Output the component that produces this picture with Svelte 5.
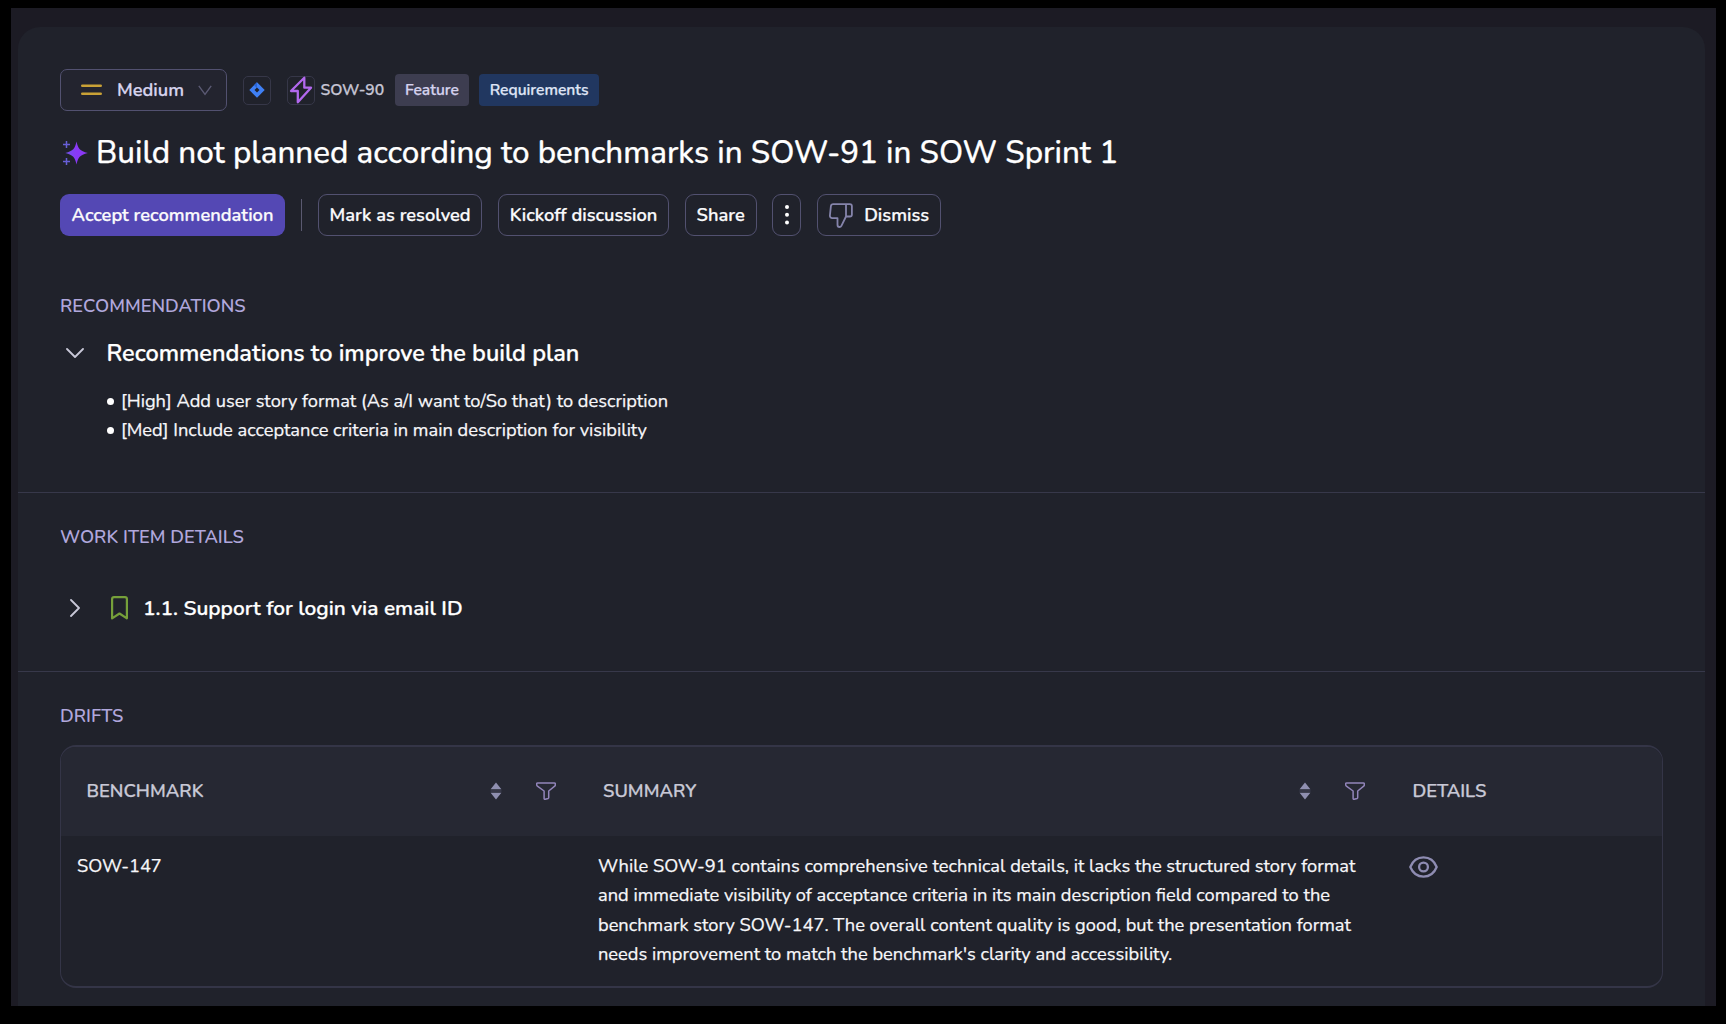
<script lang="ts">
  const title = 'Build not planned according to benchmarks in SOW-91 in SOW Sprint 1';

  const recommendations = [
    '[High] Add user story format (As a/I want to/So that) to description',
    '[Med] Include acceptance criteria in main description for visibility'
  ];

  const drifts = [
    {
      benchmark: 'SOW-147',
      summary: [
        'While SOW-91 contains comprehensive technical details, it lacks the structured story format',
        'and immediate visibility of acceptance criteria in its main description field compared to the',
        'benchmark story SOW-147. The overall content quality is good, but the presentation format',
        "needs improvement to match the benchmark's clarity and accessibility."
      ]
    }
  ];
</script>

{#snippet columnTools()}
  <button class="icon-btn sort" aria-label="Sort">
    <svg width="12" height="18" viewBox="0 0 12 18">
      <path d="M6 0.5 11.4 7.2H0.6zM6 17.5 11.4 10.8H0.6z" fill="#8f8fb0" />
      <path d="M0.5 9h11" stroke="#46465c" />
    </svg>
  </button>
  <button class="icon-btn" aria-label="Filter">
    <svg width="20" height="18" viewBox="0 0 20 18" fill="none" stroke="#9285ba" stroke-width="1.5" stroke-linejoin="round">
      <path d="M1.6 0.9h16.8c.6 0 .9.5.9 1v1c0 .5-.2.9-.6 1.2L12.7 9v6.6c0 .4-.2.7-.6.9l-2.9.8c-.6.1-1.1-.2-1.1-.8V9L1.4 4.1C1 3.8.7 3.4.7 2.9v-1c0-.5.3-1 .9-1z" />
    </svg>
  </button>
{/snippet}

<div class="window">
  <main class="panel">
    <section class="overview">
      <div class="meta">
        <button class="priority">
          <svg width="21" height="12" viewBox="0 0 21 12" stroke="#c9a136" stroke-width="2.6" stroke-linecap="round">
            <path d="M1.3 1.7h18.4M1.3 9.7h18.4" />
          </svg>
          <span>Medium</span>
          <svg width="14" height="11" viewBox="0 0 14 11" fill="none" stroke="#5b5a74" stroke-width="1.4">
            <path d="M.8.8 7 9.3 13.2.8" />
          </svg>
        </button>
        <span class="tool jira">
          <svg width="16" height="16" viewBox="0 0 16 16">
            <path d="M8 .3 15.7 8 8 15.7.3 8z" fill="#3f80f5" />
            <path d="M8 .3 5 3.3 8 6.3v-3z" fill="#2b66d6" />
            <path d="M8 5.5 10.5 8 8 10.5 5.5 8z" fill="#20222b" />
          </svg>
        </span>
        <span class="tool">
          <svg width="24" height="28" viewBox="0 0 24 28" fill="none" stroke="#b268ee" stroke-width="2.3" stroke-linejoin="round">
            <path d="M15.3 1.7 2 15h6.8v11.3L22 11.7h-6.7z" />
          </svg>
        </span>
        <span class="key">SOW-90</span>
        <span class="tag">Feature</span>
        <span class="tag blue">Requirements</span>
      </div>

      <div class="title">
        <svg width="26" height="26" viewBox="0 0 26 26">
          <defs>
            <linearGradient id="spark" x1="0" x2="1">
              <stop offset="0" stop-color="#6e55e8" />
              <stop offset=".5" stop-color="#8a38f5" />
            </linearGradient>
          </defs>
          <path d="M14.5 1.5c1.6 7.3 3.2 9.3 11.3 11.5-8.1 2.2-9.7 4.2-11.3 11.5C12.9 17.2 11.3 15.2 3.3 13c8-2.2 9.6-4.2 11.2-11.5z" fill="url(#spark)" />
          <path d="M4.5 1v7M1 4.5h7M4.5 18v7M1 21.5h7" stroke="#675fd8" stroke-width="1.5" />
        </svg>
        <h1>{title}</h1>
      </div>

      <div class="actions">
        <button class="btn primary">Accept recommendation</button>
        <span class="rule"></span>
        <button class="btn resolve">Mark as resolved</button>
        <button class="btn kickoff">Kickoff discussion</button>
        <button class="btn share">Share</button>
        <button class="btn more" aria-label="More actions">
          <svg width="4" height="20" viewBox="0 0 4 20" fill="#fff">
            <circle cx="2" cy="2" r="2" /><circle cx="2" cy="9.8" r="2" /><circle cx="2" cy="17.6" r="2" />
          </svg>
        </button>
        <button class="btn dismiss">
          <svg width="24" height="25" viewBox="0 0 24 25" fill="none" stroke="#8584ab" stroke-width="1.8" stroke-linejoin="round">
            <path d="M17 1.2H4.2c-1.2 0-2.1.8-2.3 2L.9 12.5c-.1 1.5.9 2.6 2.3 2.6h5.3v6.6c0 1.4.9 2.3 2 2.3.8 0 1.5-.4 1.9-1.2L17 13.5zM17 1.2h3.8c1.2 0 2.1.9 2.1 2.1v8.1c0 1.2-.9 2.1-2.1 2.1H17" />
          </svg>
          Dismiss
        </button>
      </div>

      <h2 class="recs">Recommendations</h2>
      <div class="group">
        <svg width="18" height="10" viewBox="0 0 18 10" fill="none" stroke="#c9c8d8" stroke-width="1.8" stroke-linecap="round" stroke-linejoin="round">
          <path d="M1 1l8 8 8-8" />
        </svg>
        <h3>Recommendations to improve the build plan</h3>
      </div>
      <ul>
        {#each recommendations as item}
          <li>{item}</li>
        {/each}
      </ul>
    </section>

    <section class="work">
      <h2>Work item details</h2>
      <div class="item">
        <svg class="caret" width="10" height="18" viewBox="0 0 10 18" fill="none" stroke="#c9c8d8" stroke-width="1.8" stroke-linecap="round" stroke-linejoin="round">
          <path d="M1 1l8 8-8 8" />
        </svg>
        <svg width="17" height="24" viewBox="0 0 17 24" fill="none" stroke="#76a03a" stroke-width="2.2" stroke-linejoin="round">
          <path d="M3 1.2h11c1.1 0 1.9.8 1.9 1.9v19.2l-7.4-4.8-7.4 4.8V3.1C1.1 2 1.9 1.2 3 1.2z" />
        </svg>
        <h4>1.1. Support for login via email ID</h4>
      </div>
    </section>

    <section class="drifts">
      <h2>Drifts</h2>
      <div class="table">
        <div class="row head">
          <div class="cell first"><span>Benchmark</span>{@render columnTools()}</div>
          <div class="cell second"><span>Summary</span>{@render columnTools()}</div>
          <div class="cell third"><span>Details</span></div>
        </div>
        {#each drifts as drift}
          <div class="row body">
            <div class="cell">{drift.benchmark}</div>
            <div class="cell">
              {#each drift.summary as line}
                <span class="line">{line}</span>
              {/each}
            </div>
            <div class="cell">
              <button class="icon-btn eye" aria-label="View details">
                <svg width="29" height="22" viewBox="0 0 29 22" fill="none" stroke="#8e8cb2" stroke-width="2.3">
                  <path d="M1.3 11C3.6 5.3 8.5 1.4 14.5 1.4S25.4 5.3 27.7 11c-2.3 5.7-7.2 9.6-13.2 9.6S3.6 16.7 1.3 11z" stroke-linejoin="round" />
                  <circle cx="14.5" cy="11" r="4.4" />
                </svg>
              </button>
            </div>
          </div>
        {/each}
      </div>
    </section>
  </main>
</div>

<style>
  :global(body) {
    box-sizing: border-box;
    min-height: 100vh;
    padding: 8px 0 0 11px;
    background: #000;
  }

  .window {
    box-sizing: border-box;
    width: 1704.5px;
    height: 998px;
    padding: 19px 10.5px 0 7px;
    background: #1c1b24;
    font-family: Nunito, Lato, sans-serif;
    color: #f7f7fa;
    -webkit-text-stroke: 0.25px;
    overflow: hidden;
  }

  .panel {
    height: 100%;
    background: #20222b;
    border-radius: 22px 22px 0 0;
  }

  section {
    box-sizing: border-box;
    padding: 0 42px;
  }

  h1,
  h2,
  h3,
  h4,
  ul {
    margin: 0;
    padding: 0;
  }

  button {
    font: inherit;
    color: inherit;
    background: none;
    cursor: pointer;
  }

  svg {
    display: block;
    flex: none;
  }

  .overview {
    height: 466px;
    padding-top: 42px;
    border-bottom: 1px solid #37384a;
  }

  .meta {
    display: flex;
    align-items: center;
    height: 42px;
  }

  .priority {
    box-sizing: border-box;
    display: flex;
    align-items: center;
    width: 167px;
    height: 42px;
    padding: 0 14.5px 0 20px;
    border: 1px solid #525170;
    border-radius: 7px;
    background: #23242f;
    color: #d6d4ee;
    font-size: 18.3px;
    font-weight: 600;
  }

  .priority span {
    flex: 1;
    padding-left: 15px;
    text-align: left;
  }

  .tool {
    box-sizing: border-box;
    display: flex;
    align-items: center;
    justify-content: center;
    width: 28.6px;
    height: 29px;
    border: 1px solid #363748;
    border-radius: 5px;
  }

  .jira {
    margin: 0 15.6px;
  }

  .key {
    box-sizing: border-box;
    width: 79.6px;
    padding-left: 5px;
    color: #c6c5d4;
    font-size: 15.7px;
    font-weight: 600;
  }

  .tag {
    box-sizing: border-box;
    width: 74px;
    height: 32px;
    margin-right: 10.4px;
    border-radius: 4px;
    background: #3d3d50;
    color: #d5d2ee;
    font-size: 15.6px;
    font-weight: 600;
    line-height: 32px;
    text-align: center;
  }

  .blue {
    width: 119.5px;
    background: #213760;
    color: #dfe4f5;
  }

  .title {
    display: flex;
    align-items: center;
    gap: 8.5px;
    height: 40px;
    margin: 22px 0 21px 1.5px;
  }

  h1 {
    font-size: 31.33px;
    font-weight: 500;
    line-height: 40px;
    white-space: nowrap;
    color: #fff;
  }

  .actions {
    display: flex;
    align-items: center;
    gap: 15.6px;
  }

  .btn {
    box-sizing: border-box;
    display: flex;
    align-items: center;
    justify-content: center;
    height: 42px;
    padding: 0;
    border: 1px solid #525170;
    border-radius: 9px;
    font-size: 18.27px;
    font-weight: 600;
    white-space: nowrap;
    color: #fafafc;
  }

  .primary {
    width: 225px;
    border: none;
    background: #5448b4;
  }

  .rule {
    width: 1.5px;
    height: 32px;
    background: #5a5970;
  }

  .resolve {
    width: 164.8px;
  }

  .kickoff {
    width: 171px;
  }

  .share {
    width: 72px;
  }

  .more {
    width: 29px;
  }

  .dismiss {
    gap: 11px;
    width: 124.5px;
  }

  h2 {
    font-size: 18.27px;
    font-weight: 600;
    line-height: 24px;
    text-transform: uppercase;
    color: #b0a7dc;
    -webkit-text-stroke: 0;
  }

  .recs {
    margin-top: 57.5px;
  }

  .group {
    display: flex;
    align-items: center;
    gap: 22.5px;
    margin: 20px 0 19.5px 6px;
  }

  h3 {
    font-size: 23.48px;
    font-weight: 600;
    line-height: 30px;
    color: #fff;
  }

  ul {
    padding-left: 47px;
    list-style: none;
    font-size: 18.27px;
    line-height: 29px;
  }

  li {
    display: flex;
    align-items: center;
    gap: 7px;
  }

  li::before {
    content: '';
    width: 7px;
    height: 7px;
    border-radius: 50%;
    background: #fff;
  }

  .work {
    height: 179px;
    padding-top: 31.5px;
    border-bottom: 1px solid #37384a;
  }

  .item {
    display: flex;
    align-items: center;
    margin: 44.5px 0 0 10px;
  }

  .caret {
    margin-right: 31px;
  }

  h4 {
    margin-left: 15px;
    font-size: 20.87px;
    font-weight: 600;
    line-height: 30px;
    color: #fff;
  }

  .drifts {
    padding-top: 32px;
  }

  .table {
    box-sizing: border-box;
    width: 1603px;
    height: 243px;
    margin-top: 17px;
    border: solid #343547;
    border-width: 2px 1px;
    border-radius: 16px;
    overflow: hidden;
  }

  .row {
    display: grid;
    grid-template-columns: 521px 811px 1fr;
  }

  .head {
    box-sizing: border-box;
    height: 89px;
    padding-bottom: 2px;
    background: #262833;
    font-size: 18.35px;
    font-weight: 600;
    text-transform: uppercase;
    color: #c8c8d6;
  }

  .head .cell {
    display: flex;
    align-items: center;
    padding-right: 26px;
  }

  .head span {
    flex: 1;
  }

  .head .first {
    padding-left: 25.5px;
  }

  .head .second {
    padding-left: 21px;
    padding-right: 28px;
  }

  .head .third {
    padding-left: 19.5px;
  }

  .icon-btn {
    padding: 0;
    border: 0;
  }

  .sort {
    margin-right: 34px;
  }

  .body .cell {
    padding: 15.5px 16px 0;
    font-size: 18.27px;
    line-height: 29.6px;
  }

  .line {
    display: block;
    white-space: nowrap;
  }

  .eye {
    display: block;
    margin-top: 4.5px;
  }
</style>
